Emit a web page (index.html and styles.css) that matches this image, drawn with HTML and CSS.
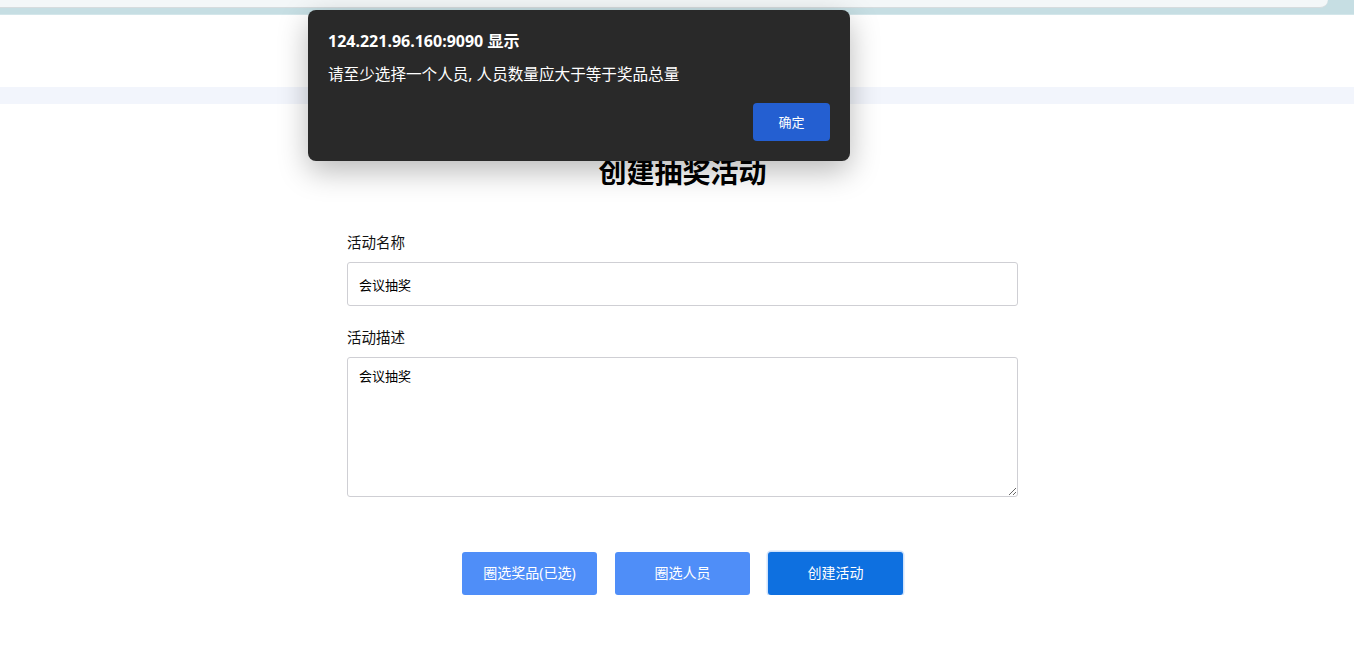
FILE: index.html
```html
<!DOCTYPE html>
<html lang="zh-CN">
<head>
<meta charset="utf-8">
<title>创建抽奖活动</title>
<link rel="stylesheet" href="styles.css">
</head>
<body>
<div class="chrome">
  <div class="chrome-bar"></div>
</div>
<div class="header"></div>
<div class="stripe"></div>
<main class="page">
  <h1 class="title">创建抽奖活动</h1>
  <form class="form">
    <label class="label">活动名称</label>
    <input class="input" type="text" value="会议抽奖">
    <label class="label label-gap">活动描述</label>
    <textarea class="textarea">会议抽奖</textarea>
    <div class="actions">
      <button type="button" class="btn btn-light">圈选奖品(已选)</button>
      <button type="button" class="btn btn-light">圈选人员</button>
      <button type="button" class="btn btn-dark">创建活动</button>
    </div>
  </form>
</main>
<div class="dialog">
  <div class="dialog-title">124.221.96.160:9090 显示</div>
  <div class="dialog-msg">请至少选择一个人员, 人员数量应大于等于奖品总量</div>
  <div class="dialog-actions">
    <button type="button" class="dialog-ok">确定</button>
  </div>
</div>
</body>
</html>
```
FILE: styles.css
```css
html, body {
  margin: 0;
  padding: 0;
  background: #ffffff;
  font-family: "Noto Sans", "Noto Sans CJK SC", sans-serif;
  color: #000;
}
.chrome {
  height: 15px;
  background: #c6dee3;
  box-sizing: border-box;
  border-bottom: 1px solid #d3e6ea;
}
.chrome-bar {
  width: 1328px;
  height: 7px;
  background: #f3f7f8;
  border-bottom: 1px solid #d6dcde;
  border-bottom-right-radius: 10px;
}
.header {
  height: 72px;
}
.stripe {
  height: 17px;
  background: #f2f5fc;
}
.page {
  display: flex;
  flex-direction: column;
  align-items: center;
  padding-left: 11px;
}
.title {
  margin: 50px 0 0;
  font-size: 28px;
  font-weight: 700;
  line-height: 36px;
  height: 36px;
}
.form {
  width: 671px;
  display: flex;
  flex-direction: column;
  margin-top: 42px;
}
.label {
  font-size: 14.5px;
  line-height: 20px;
  height: 20px;
  margin-bottom: 10px;
  color: #111;
}
.label-gap {
  margin-top: 21px;
}
.input {
  box-sizing: border-box;
  height: 44px;
  border: 1px solid #cfcfd4;
  border-radius: 3px;
  padding: 0 11px;
  font-family: inherit;
  font-size: 13px;
  color: #000;
  outline: none;
}
.textarea {
  box-sizing: border-box;
  height: 140px;
  border: 1px solid #cfcfd4;
  border-radius: 3px;
  padding: 8px 11px;
  font-family: inherit;
  font-size: 13px;
  color: #000;
  resize: both;
  outline: none;
}
.actions {
  display: flex;
  justify-content: center;
  gap: 18px;
  margin-top: 55px;
}
.btn {
  width: 135px;
  height: 43px;
  border: none;
  border-radius: 3px;
  color: #fff;
  font-family: inherit;
  font-size: 14px;
  padding: 0 0 4px;
  cursor: pointer;
}
.btn-light {
  background: #4f8ef8;
}
.btn-dark {
  background: #0e70e0;
  box-shadow: 0 0 0 1.5px #cfe2fb;
}
.dialog {
  position: absolute;
  left: 308px;
  top: 10px;
  width: 542px;
  box-sizing: border-box;
  background: #292929;
  border-radius: 8px;
  padding: 20px 20px 20px 20px;
  box-shadow: 0 10px 30px rgba(0, 0, 0, 0.28);
  color: #fff;
}
.dialog-title {
  font-weight: 700;
  font-size: 16px;
  line-height: 22px;
}
.dialog-msg {
  font-size: 15.6px;
  line-height: 20px;
  margin-top: 12px;
}
.dialog-actions {
  display: flex;
  justify-content: flex-end;
  margin-top: 19px;
}
.dialog-ok {
  width: 77px;
  height: 38px;
  border: none;
  border-radius: 4px;
  background: #245fd1;
  color: #fff;
  font-family: inherit;
  font-size: 13px;
  padding: 0 0 2px;
}
```
